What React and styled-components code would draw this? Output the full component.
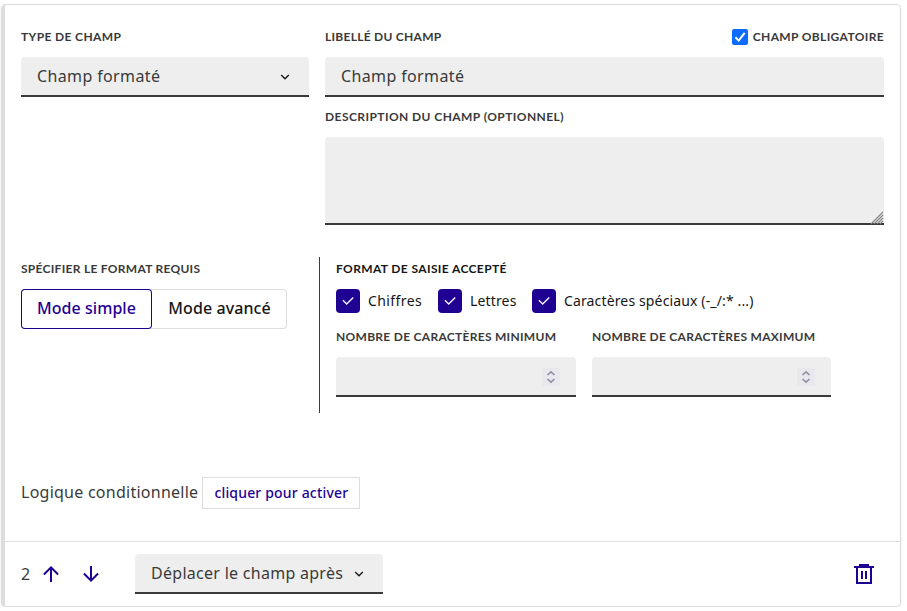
import React from "react";
import styled, { createGlobalStyle, css } from "styled-components";

const blue = "#1f0093";
const grey = "#3a3a3a";
const line = "#dddddd";

const GlobalStyle = createGlobalStyle`
  *, *::before, *::after { box-sizing: border-box; }
  body {
    margin: 0;
    background: #fff;
    color: ${grey};
    font-family: "Noto Sans", "Open Sans", sans-serif;
    font-size: 16px;
    line-height: 24px;
  }
`;

const Card = styled.section`
  width: 900px;
  height: 603px;
  margin: 4px 0 0 1px;
  display: flex;
  flex-direction: column;
  border: 1px solid ${line};
  border-left-width: 4px;
  border-radius: 5px;
  background: #fff;
  box-shadow: 0 1px 3px rgba(0, 0, 0, 0.09);
`;

const Body = styled.div`
  flex: 1;
  display: flex;
  flex-direction: column;
  padding: 20px 16px 0;
`;

const TopRow = styled.div`
  display: grid;
  grid-template-columns: 288px 1fr;
  column-gap: 16px;
  height: 228px;
`;

const FormatRow = styled.div`
  display: grid;
  grid-template-columns: 298px 1fr;
  height: 156px;
  margin-top: 4px;
`;

const Column = styled.div`
  display: flex;
  flex-direction: column;
`;

const LabelRow = styled.div`
  display: flex;
  justify-content: space-between;
  align-items: center;
`;

const Label = styled.span`
  font-family: "Lato", sans-serif;
  font-size: 12px;
  font-weight: 700;
  line-height: 24px;
  white-space: nowrap;
  text-transform: uppercase;
  margin-top: ${(p) => p.$top || 0}px;
  color: ${(p) => p.$color || grey};
  letter-spacing: ${(p) => p.$track || 0}px;
`;

const Text = styled.span`
  white-space: nowrap;
  letter-spacing: ${(p) => p.$track || 0}px;
`;

const Field = styled.div`
  width: ${(p) => p.$width || "100%"};
  height: 40px;
  margin-top: ${(p) => p.$top ?? 8}px;
  padding: 0 16px;
  display: flex;
  align-items: center;
  justify-content: ${(p) => (p.$end ? "flex-end" : "space-between")};
  background: #eeeeee;
  border-bottom: 2px solid ${grey};
  border-radius: 4px 4px 0 0;
`;

const TextArea = styled(Field)`
  height: 88px;
  align-items: flex-end;
  padding: 0 1px 0 0;
`;

const Required = styled.div`
  display: flex;
  align-items: center;
  gap: 5px;
`;

const NativeBox = styled.span`
  display: flex;
  width: 16px;
  height: 16px;
  border-radius: 2px;
  background: #0d6cff;
`;

const Segments = styled.div`
  display: flex;
  margin-top: 8px;
  width: 266px;
  height: 40px;
  border-radius: 4px;
  box-shadow: inset 0 0 0 1px ${line};
`;

const Segment = styled.button`
  flex: none;
  width: ${(p) => p.$width}px;
  padding: 0 0 2px;
  border: 0;
  border-radius: 4px;
  background: transparent;
  color: #161616;
  font: 500 16px "Noto Sans", sans-serif;
  ${(p) => p.$active && css`
    color: ${blue};
    box-shadow: inset 0 0 0 1px ${blue};
  `}
`;

const FormatPanel = styled(Column)`
  padding-left: 16px;
  border-left: 1px solid ${grey};
`;

const Checks = styled.div`
  display: flex;
  margin-top: 8px;
  gap: 16px;
`;

const CheckItem = styled.div`
  display: flex;
  align-items: center;
  gap: 8px;
  height: 24px;
  color: #161616;
  font-size: 14px;
  width: ${(p) => p.$width}px;
`;

const CheckBox = styled.span`
  display: flex;
  align-items: center;
  justify-content: center;
  flex: none;
  width: 24px;
  height: 24px;
  border-radius: 4px;
  background: ${blue};
`;

const Limits = styled.div`
  display: grid;
  grid-template-columns: 240px 239px;
  column-gap: 16px;
  margin-top: 12px;
`;

const Spinner = styled.span`
  display: flex;
  width: 18px;
  height: 18px;
  margin-top: 2px;
  background: #e8e8ed;
`;

const Logic = styled.div`
  display: flex;
  align-items: center;
  gap: 4px;
  margin-top: 64px;
`;

const LogicLabel = styled(Text)`
  padding-bottom: 2px;
`;

const Activate = styled.button`
  width: 158px;
  height: 32px;
  padding: 0 0 1px;
  border: 1px solid ${line};
  background: #fff;
  color: ${blue};
  font: 500 14px "Noto Sans", sans-serif;
`;

const Footer = styled.footer`
  height: 65px;
  display: flex;
  align-items: center;
  padding: 0 24px 0 16px;
  border-top: 1px solid ${line};
`;

const Position = styled.span`
  width: 18px;
  padding-bottom: 1px;
`;

const Arrows = styled.div`
  display: flex;
  gap: 16px;
  width: 96px;
`;

const Spacer = styled.span`
  flex: 1;
`;

const Icon = styled.svg`
  display: block;
  flex: none;
  fill: ${(p) => p.$color || blue};
`;

const SelectIcon = styled(Icon)`
  margin-top: 2px;
`;

const Chevron = () => (
  <SelectIcon width="16" height="16" viewBox="0 0 24 24" $color="#161616">
    <path d="M12 13.17l4.95-4.95 1.41 1.41L12 16 5.64 9.64l1.41-1.42z" />
  </SelectIcon>
);

const Check = ({ label, track, width }) => (
  <CheckItem $width={width}>
    <CheckBox>
      <Icon width="16" height="16" viewBox="0 0 24 24" $color="#f5f5fe">
        <path d="M10 15.17l9.19-9.19 1.42 1.41L10 18l-6.36-6.36 1.41-1.42z" />
      </Icon>
    </CheckBox>
    <Text $track={track}>{label}</Text>
  </CheckItem>
);

const NumberField = ({ label, track }) => (
  <Column>
    <Label $track={track}>{label}</Label>
    <Field $end>
      <Spinner>
        <Icon width="18" height="18" viewBox="0 0 18 18" $color="none">
          <path d="M5.5 7L9 3.8 12.5 7M5.5 11L9 14.2 12.5 11" stroke="#8f8f9f" strokeWidth="1.6" />
        </Icon>
      </Spinner>
    </Field>
  </Column>
);

export default function App() {
  return (
    <>
      <GlobalStyle />
      <Card>
        <Body>
          <TopRow>
            <Column>
              <Label $track={0.37}>Type de champ</Label>
              <Field>
                <Text $track={0.37}>Champ formaté</Text>
                <Chevron />
              </Field>
            </Column>
            <Column>
              <LabelRow>
                <Label $track={0.27}>Libellé du champ</Label>
                <Required>
                  <NativeBox>
                    <Icon width="16" height="16" viewBox="0 0 16 16" $color="none">
                      <path d="M3.4 8.3l3.3 3.3 6-7.8" stroke="#fff" strokeWidth="2" />
                    </Icon>
                  </NativeBox>
                  <Label $track={0.36}>Champ obligatoire</Label>
                </Required>
              </LabelRow>
              <Field>
                <Text $track={0.37}>Champ formaté</Text>
              </Field>
              <Label $top={8} $track={0.43}>Description du champ (optionnel)</Label>
              <TextArea $end>
                <Icon width="12" height="12" viewBox="0 0 12 12" overflow="visible" $color="none">
                  <path d="M0 13L12 1M3 13l9-9M6 13l6-6M9 13l3-3" stroke="#858585" strokeWidth="1.1" />
                </Icon>
              </TextArea>
            </Column>
          </TopRow>

          <FormatRow>
            <Column>
              <Label $track={0.28}>Spécifier le format requis</Label>
              <Segments>
                <Segment $active $width={131}><Text $track={0.05}>Mode simple</Text></Segment>
                <Segment $width={135}><Text $track={0.08}>Mode avancé</Text></Segment>
              </Segments>
            </Column>
            <FormatPanel>
              <Label $track={0.38} $color="#161616">Format de saisie accepté</Label>
              <Checks>
                <Check label="Chiffres" track={0.4} width={86} />
                <Check label="Lettres" track={0.15} width={78} />
                <Check label="Caractères spéciaux (-_/:* ...)" track={0.14} width={222} />
              </Checks>
              <Limits>
                <NumberField label="Nombre de caractères minimum" track={0.29} />
                <NumberField label="Nombre de caractères maximum" track={0.27} />
              </Limits>
            </FormatPanel>
          </FormatRow>

          <Logic>
            <LogicLabel $track={0.25}>Logique conditionnelle</LogicLabel>
            <Activate><Text $track={0.17}>cliquer pour activer</Text></Activate>
          </Logic>
        </Body>

        <Footer>
          <Position>2</Position>
          <Arrows>
            <Icon width="24" height="24" viewBox="0 0 24 24">
              <path d="M13 7.83V20h-2V7.83l-5.36 5.36-1.42-1.41L12 4l7.78 7.78-1.42 1.41z" />
            </Icon>
            <Icon width="24" height="24" viewBox="0 0 24 24">
              <path d="M13 16.17V4h-2v12.17l-5.36-5.36-1.42 1.41L12 20l7.78-7.78-1.42-1.41z" />
            </Icon>
          </Arrows>
          <Field $width="248px" $top={0}>
            <Text $track={0.28}>Déplacer le champ après</Text>
            <Chevron />
          </Field>
          <Spacer />
          <Icon width="24" height="24" viewBox="0 0 24 24">
            <path fillRule="evenodd" d="M7 2h10v2h5v2h-2v16H4V6H2V4h5zM6 6v14h12V6zM9 9h2v8H9zM13 9h2v8h-2z" />
          </Icon>
        </Footer>
      </Card>
    </>
  );
}
